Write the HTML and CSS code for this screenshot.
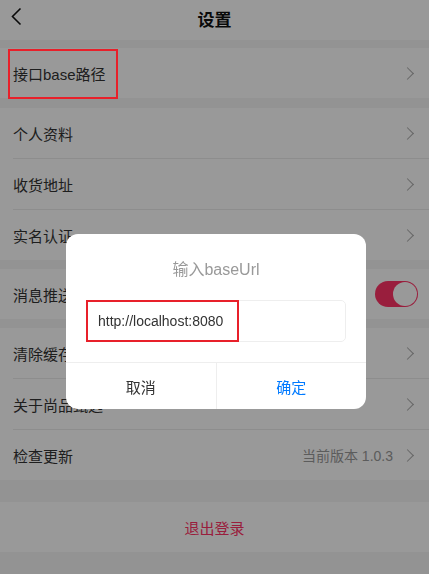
FILE: index.html
```html
<!DOCTYPE html>
<html lang="zh-CN">
<head>
    <meta charset="UTF-8">
    <meta name="viewport" content="width=device-width, initial-scale=1.0">
    <title>设置</title>
    <link rel="stylesheet" href="styles.css">
</head>
<body>
    <div class="page">
        <div class="nav-bar">
            <span class="nav-back">
                <svg width="14" height="20" viewBox="0 0 14 20"><path d="M10.5 1.5 L2.5 9.5 L10.5 17.5" fill="none" stroke="#111" stroke-width="1.6"/></svg>
            </span>
            <span class="nav-title">设置</span>
        </div>

        <div class="group first">
            <div class="cell">
                <span class="cell-label">接口base路径</span>
                <span class="arrow"></span>
            </div>
        </div>

        <div class="group">
            <div class="cell">
                <span class="cell-label">个人资料</span>
                <span class="arrow"></span>
            </div>
            <div class="cell">
                <span class="cell-label">收货地址</span>
                <span class="arrow"></span>
            </div>
            <div class="cell">
                <span class="cell-label">实名认证</span>
                <span class="arrow"></span>
            </div>
        </div>

        <div class="group">
            <div class="cell">
                <span class="cell-label">消息推送</span>
                <span class="switch on"><span class="switch-knob"></span></span>
            </div>
        </div>

        <div class="group">
            <div class="cell">
                <span class="cell-label">清除缓存</span>
                <span class="arrow"></span>
            </div>
            <div class="cell">
                <span class="cell-label">关于尚品甄选</span>
                <span class="arrow"></span>
            </div>
            <div class="cell">
                <span class="cell-label">检查更新</span>
                <span class="cell-value">当前版本 1.0.3</span>
                <span class="arrow"></span>
            </div>
        </div>

        <div class="logout">退出登录</div>
    </div>

    <div class="mask"></div>

    <div class="dialog">
        <div class="dialog-title">输入baseUrl</div>
        <div class="dialog-body">
            <div class="dialog-input">http://localhost:8080</div>
        </div>
        <div class="dialog-footer">
            <span class="dialog-btn">取消</span>
            <span class="dialog-btn confirm">确定</span>
        </div>
    </div>

    <div class="mark mark-row"></div>
    <div class="mark mark-input"></div>
</body>
</html>
```

FILE: styles.css
```css
body {
    font-family: "Liberation Sans", "Noto Sans CJK SC", sans-serif;
    margin: 0;
    padding: 0;
    background-color: #f5f5f5;
    color: #333;
}
.page {
    width: 429px;
    height: 574px;
    overflow: hidden;
}
.nav-bar {
    height: 40px;
    background-color: #fff;
    display: flex;
    align-items: center;
    justify-content: center;
    position: relative;
}
.nav-back {
    position: absolute;
    left: 10px;
    top: 7px;
}
.nav-title {
    font-size: 17px;
    font-weight: bold;
    color: #111;
    margin-top: -4px;
}
.group {
    background-color: #fff;
    margin-top: 9px;
}
.group.first {
    margin-top: 8px;
}
.group.first + .group {
    margin-top: 10px;
}
.cell {
    height: 50px;
    display: flex;
    align-items: center;
    padding: 0 16px 0 13px;
    position: relative;
}
.cell + .cell {
    border-top: 1px solid #ececec;
    margin-left: 13px;
    padding-left: 0;
}
.cell-label {
    flex: 1;
    font-size: 15px;
    color: #333;
}
.cell-value {
    font-size: 14px;
    color: #999;
    margin-right: 10px;
}
.arrow {
    width: 8px;
    height: 8px;
    border-top: 1.3px solid #aaa;
    border-right: 1.3px solid #aaa;
    transform: rotate(45deg);
    margin-right: 1px;
}
.switch {
    width: 43px;
    height: 26px;
    border-radius: 13px;
    background-color: #ff3366;
    position: relative;
    margin-right: -5px;
}
.switch-knob {
    position: absolute;
    right: 1px;
    top: 1px;
    width: 24px;
    height: 24px;
    border-radius: 50%;
    background-color: #fff;
}
.logout {
    margin-top: 22px;
    height: 50px;
    background-color: #fff;
    display: flex;
    align-items: center;
    justify-content: center;
    font-size: 15px;
    color: #ff3366;
}
.mask {
    position: fixed;
    left: 0;
    top: 0;
    right: 0;
    bottom: 0;
    background-color: rgba(0, 0, 0, 0.4);
}
.dialog {
    position: fixed;
    left: 66px;
    top: 234px;
    width: 300px;
    background-color: #fff;
    border-radius: 12px;
    overflow: hidden;
}
.dialog-title {
    text-align: center;
    font-size: 16px;
    color: #999;
    padding-top: 26px;
    line-height: 20px;
}
.dialog-body {
    padding: 20px 20px 20px;
}
.dialog-input {
    height: 40px;
    border: 1px solid #eee;
    border-radius: 5px;
    display: flex;
    align-items: center;
    padding-left: 11px;
    font-size: 14px;
    color: #333;
}
.dialog-footer {
    display: flex;
    border-top: 1px solid #eee;
}
.dialog-btn {
    flex: 1;
    height: 46px;
    display: flex;
    align-items: center;
    justify-content: center;
    font-size: 15px;
    color: #333;
}
.dialog-btn.confirm {
    border-left: 1px solid #eee;
    color: #007aff;
}
.mark {
    position: fixed;
    border: 2px solid #e8202a;
    box-sizing: border-box;
}
.mark-row {
    left: 8px;
    top: 49px;
    width: 110px;
    height: 50px;
}
.mark-input {
    left: 86px;
    top: 300px;
    width: 153px;
    height: 42px;
}
```
